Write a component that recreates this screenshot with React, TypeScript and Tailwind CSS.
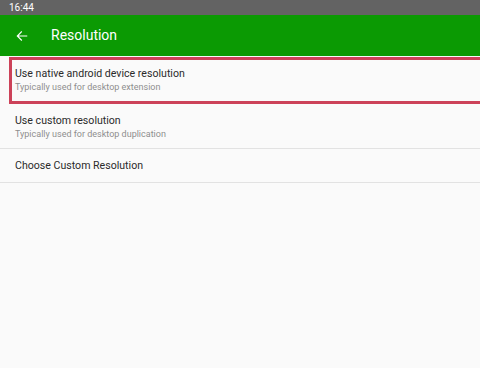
export default function App() {
  return (
    <div className="flex h-[368px] w-[480px] flex-col bg-[#fafafa] font-['Roboto',sans-serif]">
      <div className="flex h-[15px] items-center bg-[#636363] px-[9px] text-[10px] text-white">
        16:44
      </div>
      <div className="flex h-[41px] items-center bg-[#0b9a03] text-white">
        <svg className="ml-[15px] h-[14px] w-[14px]" viewBox="0 0 24 24" fill="none" stroke="currentColor" strokeWidth={2} strokeLinecap="square">
          <path d="M20 12H5M11 5l-7 7 7 7" />
        </svg>
        <span className="ml-[22px] text-[14px]">Resolution</span>
      </div>
      <div className="ml-[9px] mt-[1px] flex h-[47px] flex-col justify-center border-[3px] border-r-0 border-[#cc4259] pb-[2px] pl-[3px]">
        <div className="text-[10.6px] leading-[14px] text-[#2a2a2a]">Use native android device resolution</div>
        <div className="text-[9px] leading-[12px] text-[#8e8e8e]">Typically used for desktop extension</div>
      </div>
      <div className="flex h-[45px] flex-col justify-center border-b border-[#e2e2e2] pl-[15px] pt-[2px]">
        <div className="text-[10.6px] leading-[14px] text-[#2a2a2a]">Use custom resolution</div>
        <div className="text-[9px] leading-[12px] text-[#8e8e8e]">Typically used for desktop duplication</div>
      </div>
      <div className="flex h-[34px] items-center border-b border-[#e2e2e2] pl-[15px]">
        <div className="text-[10.6px] text-[#2a2a2a]">Choose Custom Resolution</div>
      </div>
    </div>
  );
}
